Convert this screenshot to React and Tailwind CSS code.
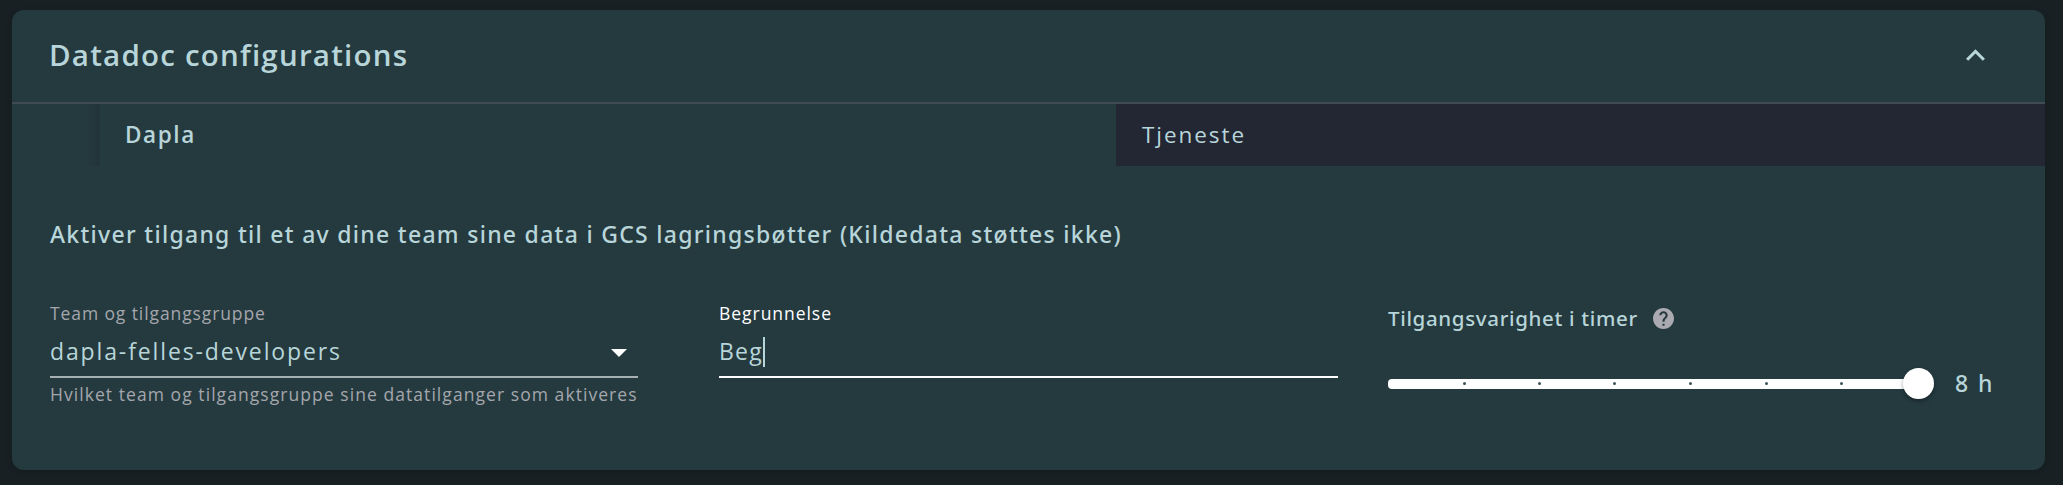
function HelpIcon() {
  return (
    <svg viewBox="2 2 20 20" className="ml-[15px] size-[21px] shrink-0 fill-[#abaab0]">
      <path d="M12 2C6.48 2 2 6.48 2 12s4.48 10 10 10 10-4.48 10-10S17.52 2 12 2zm1 17h-2v-2h2v2zm2.07-7.75-.9.92C13.45 12.9 13 13.5 13 15h-2v-.5c0-1.1.45-2.1 1.17-2.83l1.24-1.26c.37-.36.59-.86.59-1.41 0-1.1-.9-2-2-2s-2 .9-2 2H8c0-2.21 1.79-4 4-4s4 1.79 4 4c0 .88-.36 1.68-.93 2.25z" />
    </svg>
  );
}

function Header() {
  return (
    <header className="flex h-[94px] items-start justify-between border-b-2 border-[#404b56] pr-[50px] pl-[37px]">
      <h1 className="mt-[27px] text-[29.5px] leading-[36px] font-semibold tracking-[1.22px]">
        Datadoc configurations
      </h1>
      <svg viewBox="6 8 12 7.41" className="mt-[39px] mr-[10px] h-[12px] w-[19px] fill-current">
        <path d="m12 8-6 6 1.41 1.41L12 10.83l4.59 4.58L18 14z" />
      </svg>
    </header>
  );
}

function Tabs() {
  return (
    <nav className="flex h-[62px] pl-[75px] text-[22.5px] leading-[62px]">
      <div className="w-[13px] bg-linear-to-r from-[#243a3f] to-[#22343a]" />
      <div className="w-[1016px] flex-none pl-[25px] font-semibold tracking-[1.6px]">Dapla</div>
      <div className="grow bg-[#222733] pl-[26px] tracking-[1.93px]">Tjeneste</div>
    </nav>
  );
}

function TeamField() {
  return (
    <div className="w-[588px] flex-none whitespace-nowrap">
      <div className="text-[17.5px] leading-6 tracking-[0.9px] text-[#a5a6ac]">Team og tilgangsgruppe</div>
      <div className="mt-[10px] flex h-[43px] items-start justify-between border-b-2 border-[#a6afb1]">
        <span className="text-[23px] leading-8 tracking-[1.87px]">dapla-felles-developers</span>
        <svg viewBox="0 0 16 8" className="mt-[14px] mr-[11px] h-[8px] w-[16px] fill-white">
          <path d="M0 0h16L8 8z" />
        </svg>
      </div>
      <div className="mt-[4px] text-[17.5px] leading-6 tracking-[1.06px] text-[#a5a6ac]">
        Hvilket team og tilgangsgruppe sine datatilganger som aktiveres
      </div>
    </div>
  );
}

function ReasonField() {
  return (
    <div className="ml-[81px] w-[619px] flex-none">
      <div className="text-[17.5px] leading-6 tracking-[0.96px] text-white">Begrunnelse</div>
      <div className="mt-[10px] flex h-[43px] items-start border-b-2 border-white">
        <span className="text-[23px] leading-8 tracking-[1.2px]">Beg</span>
        <span className="mt-[2px] h-[30px] w-[2px] bg-[#b8d5d9]" />
      </div>
    </div>
  );
}

function DurationField() {
  return (
    <div className="mt-[3px] ml-[50px] flex-none">
      <div className="flex h-7 items-center">
        <span className="font-['Noto_Sans',sans-serif] text-[20.5px] leading-7 font-medium tracking-[0.66px]">
          Tilgangsvarighet i timer
        </span>
        <HelpIcon />
      </div>
      <div className="mt-[36px] flex h-[31px] items-center">
        <div className="relative flex h-[10px] w-[530px] items-center rounded-[4px] bg-white">
          {[75, 150, 225, 301, 377, 452].map((x) => (
            <span key={x} className="absolute top-[3px] size-[3px] rounded-full bg-[#3b5357]" style={{ left: x }} />
          ))}
          <span className="absolute -top-[11px] -right-[16px] size-[31px] rounded-full bg-white shadow-[0_2px_4px_rgba(0,0,0,0.35)]" />
        </div>
        <span className="ml-[37px] font-['Noto_Sans',sans-serif] text-[23px] leading-[31px] font-medium tracking-[1.9px]">
          8 h
        </span>
      </div>
    </div>
  );
}

export default function App() {
  return (
    <div className="h-[485px] w-[2063px] overflow-hidden bg-[#182023] pt-[10px] pl-[12px] font-['Open_Sans',sans-serif] text-[#b8d5d9]">
      <main className="h-[460px] w-[2033px] overflow-hidden rounded-[12px] bg-[#243a3f] shadow-[0_2px_6px_rgba(0,0,0,0.15)]">
        <Header />
        <Tabs />
        <section className="pl-[38px]">
          <h2 className="mt-[52px] font-['Noto_Sans',sans-serif] text-[23px] leading-8 font-medium tracking-[1.29px] whitespace-nowrap">
            Aktiver tilgang til et av dine team sine data i GCS lagringsbøtter (Kildedata støttes ikke)
          </h2>
          <div className="mt-[51px] flex items-start">
            <TeamField />
            <ReasonField />
            <DurationField />
          </div>
        </section>
      </main>
    </div>
  );
}
